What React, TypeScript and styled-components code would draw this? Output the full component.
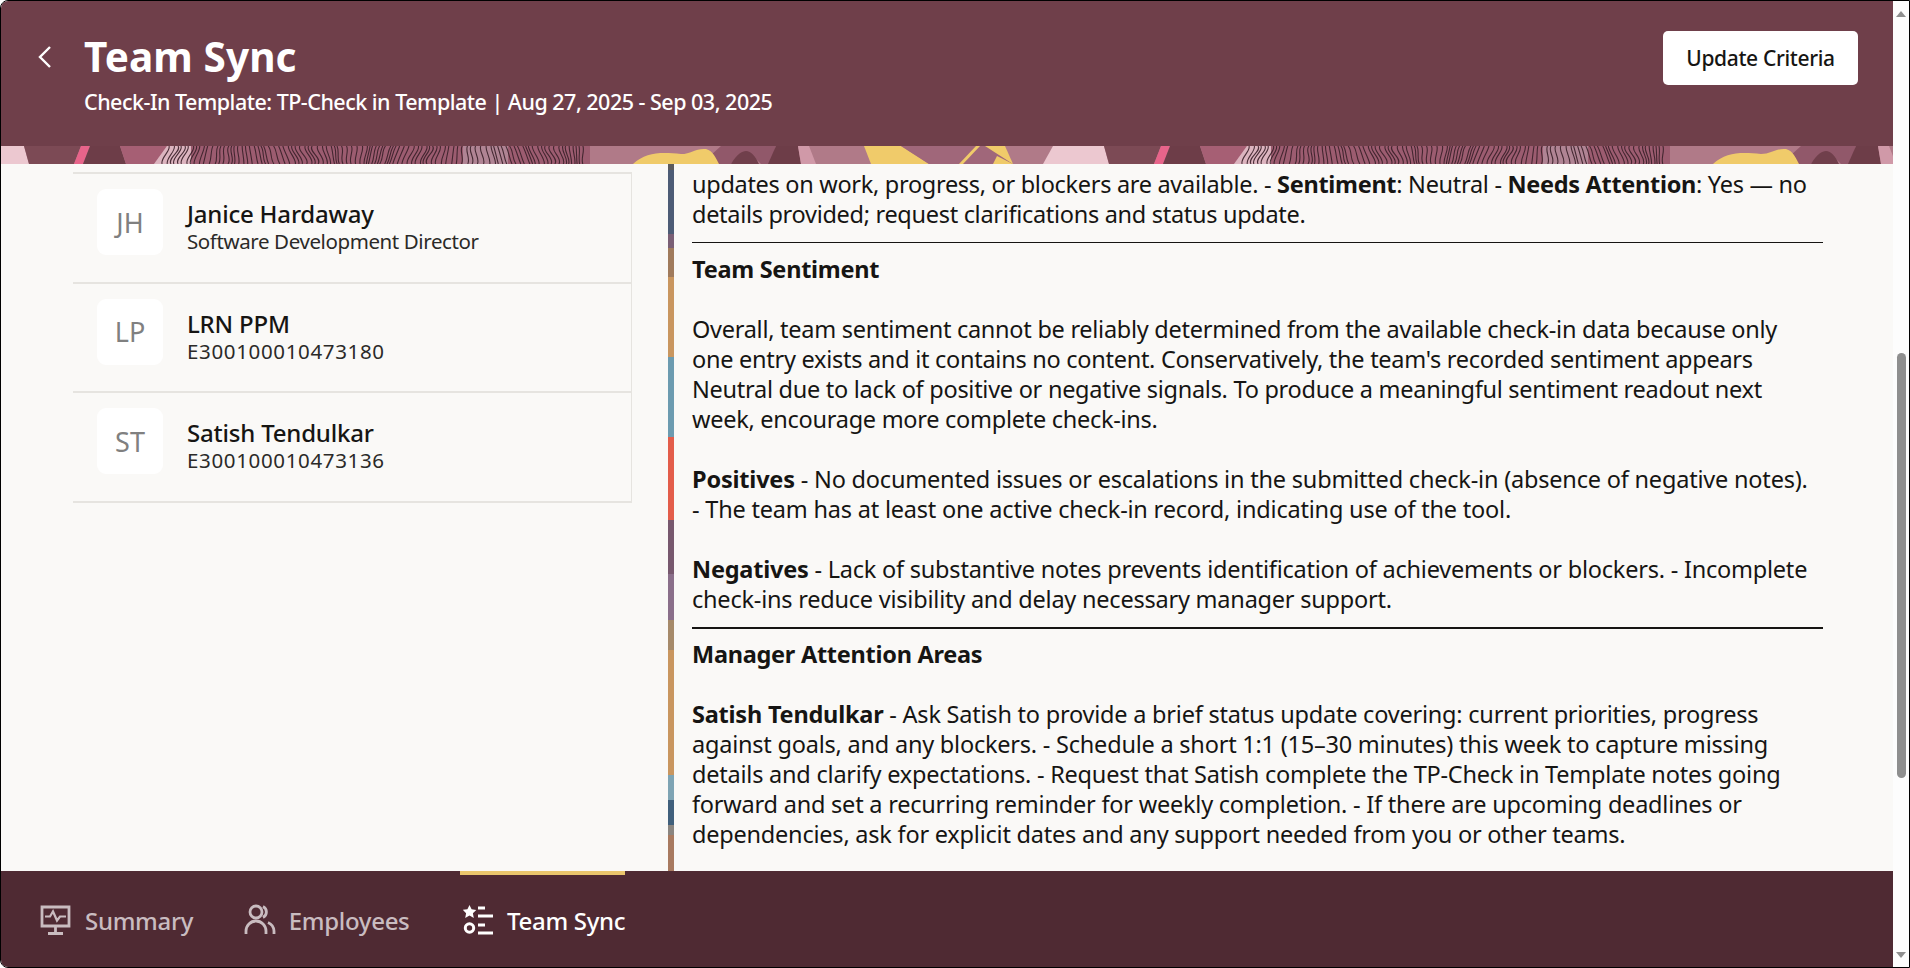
import React from "react";
import styled, { createGlobalStyle } from "styled-components";

const FONT = `"Noto Sans", "Open Sans", sans-serif`;

const Global = createGlobalStyle`
  html, body { margin: 0; padding: 0; background: #fff; }
  * { box-sizing: border-box; }
`;

const Frame = styled.div`
  width: 1910px;
  height: 968px;
  border: 1px solid #000;
  border-radius: 8px 0 0 8px;
  overflow: hidden;
  display: flex;
  font-family: ${FONT};
  color: #161513;
  background: #fff;
`;
const Main = styled.div`
  width: 1892px;
  display: flex;
  flex-direction: column;
`;
const Header = styled.header`
  height: 145px;
  background: #6f3f4a;
  display: flex;
  align-items: flex-start;
  color: #fff;
  padding: 30px 35px 0 36px;
`;
const BackButton = styled.button`
  width: 47px;
  height: 48px;
  margin-top: 2px;
  padding: 0;
  border: 0;
  background: none;
  color: #fff;
  text-align: left;
  display: flex;
  align-items: center;
`;
const HeaderText = styled.div`
  flex: 1;
`;
const Title = styled.h1`
  margin: 0;
  font-size: 40.5px;
  line-height: 52px;
  font-weight: 700;
  letter-spacing: 0.1px;
`;
const Subtitle = styled.div`
  font-size: 21.5px;
  line-height: 28px;
  font-weight: 500;
  margin-top: 5px;
  letter-spacing: -0.51px;
`;
const UpdateButton = styled.button`
  width: 195px;
  height: 54px;
  border: 0;
  border-radius: 5px;
  background: #fff;
  color: #161513;
  font-family: ${FONT};
  font-size: 21px;
  font-weight: 500;
  letter-spacing: -0.35px;
`;
const Band = styled.svg`
  display: block;
  width: 1892px;
  height: 18px;
  flex: none;
`;
const Body = styled.div`
  flex: 1;
  min-height: 0;
  display: flex;
  background: #faf9f7;
`;
const LeftPane = styled.aside`
  width: 667px;
  padding: 8px 36px 0 72px;
  flex: none;
`;
const PeopleList = styled.ul`
  list-style: none;
  margin: 0;
  padding: 0;
  border-top: 2px solid #e6e4e0;
  border-right: 1px solid #e6e4e0;
`;
const Person = styled.li`
  height: 109.6px;
  border-bottom: 2px solid #e6e4e0;
  display: flex;
  padding: 15px 0 0 24px;
`;
const Avatar = styled.div`
  width: 66px;
  height: 66px;
  border-radius: 9px;
  background: #fff;
  color: #808080;
  font-size: 27px;
  display: flex;
  align-items: center;
  justify-content: center;
  flex: none;
`;
const PersonText = styled.div`
  margin-left: 24px;
  padding-top: 10px;
`;
const PersonName = styled.div`
  font-size: 24px;
  line-height: 30px;
  font-weight: 500;
  letter-spacing: -0.2px;
`;
const PersonSub = styled.div<{ $spacing: number }>`
  font-size: 20.5px;
  line-height: 24px;
  color: #2b2a28;
  letter-spacing: ${(p) => p.$spacing}px;
`;
const Strip = styled.div`
  width: 6px;
  flex: none;
  background: linear-gradient(
    180deg,
    #5b5b5d 0 6px,
    #4d5c76 6px 70px,
    #7a5f75 70px 84px,
    #a07b5c 84px 113px,
    #c9965f 113px 193px,
    #6c9bb0 193px 273px,
    #e35d4a 273px 356px,
    #77586e 356px 410px,
    #8a6f8a 410px 456px,
    #a68a6a 456px 486px,
    #c9965f 486px 611px,
    #7ea4b4 611px 636px,
    #40607c 636px 661px,
    #8a8580 661px 671px,
    #a87a60 671px 707px
  );
`;
const Article = styled.article`
  flex: 1;
  padding: 5px 70px 0 18px;
  font-size: 23.5px;
  line-height: 30px;
  letter-spacing: -0.27px;
  overflow: hidden;
  white-space: nowrap;
`;
const Para = styled.p<{ $spacing?: number }>`
  margin: 0 0 30px;
  ${(p) => (p.$spacing !== undefined ? `letter-spacing: ${p.$spacing}px;` : "")}
  &:last-child { margin-bottom: 0; }
`;
const ParaTight = styled(Para)`
  margin-bottom: 0;
`;
const Rule = styled.hr<{ $thick?: boolean }>`
  margin: 13px 0 ${(p) => (p.$thick ? 10 : 11)}px;
  border: 0;
  height: ${(p) => (p.$thick ? 2 : 1)}px;
  background: #161513;
`;
const Heading = styled.h2`
  margin: 0 0 30px;
  font-size: inherit;
  line-height: 30px;
  font-weight: 700;
`;
const Footer = styled.nav`
  height: 96px;
  background: #4f2a33;
  display: flex;
  padding-left: 39px;
  flex: none;
`;
const Tab = styled.a<{ $active?: boolean }>`
  display: flex;
  align-items: center;
  gap: 13px;
  height: 100%;
  padding: 0 0 2px ${(p) => (p.$active ? 3 : 0)}px;
  margin-right: ${(p) => (p.$active ? 0 : 50.5)}px;
  border-top: 4px solid ${(p) => (p.$active ? "#eac66d" : "transparent")};
  color: ${(p) => (p.$active ? "#fff" : "#c9bcc0")};
  font-size: 24px;
  font-weight: 500;
  letter-spacing: -0.3px;
`;
const Scrollbar = styled.div`
  width: 16px;
  flex: none;
  display: flex;
  flex-direction: column;
  align-items: center;
  background: #fdfdfd;
`;
const ArrowUp = styled.div`
  margin-top: 10px;
  width: 0;
  height: 0;
  border-left: 5px solid transparent;
  border-right: 5px solid transparent;
  border-bottom: 6px solid #8f8f8f;
`;
const Thumb = styled.div`
  width: 9px;
  height: 425px;
  margin-top: 336px;
  border-radius: 5px;
  background: #8f8f8f;
`;
const ArrowDown = styled.div`
  margin-top: 174px;
  width: 0;
  height: 0;
  border-left: 5px solid transparent;
  border-right: 5px solid transparent;
  border-top: 6px solid #8f8f8f;
`;

function rng(seed: number) {
  let s = seed;
  return () => {
    s = (s * 9301 + 49297) % 233280;
    return s / 233280;
  };
}

function fingerprintPaths(): string[] {
  const r = rng(17);
  const out: string[] = [];
  let x = 168;
  while (x < 587) {
    const lean = Math.sin(x / 37) * 7;
    const w = Math.sin(x / 13) * 3.5 + (r() - 0.5) * 2;
    out.push(
      `M${x.toFixed(1)} 0 C${(x + w).toFixed(1)} 5 ${(x + lean - w).toFixed(1)} 12 ${(x + lean).toFixed(1)} 18`
    );
    x += 2.4 + r() * 3.2;
  }
  return out;
}

const PRINT = fingerprintPaths();

function BandTile({ offset }: { offset: number }) {
  return (
    <g transform={`translate(${offset} 0)`}>
      <rect x="-38" y="0" width="1080" height="18" fill="#b07a88" />
      <polygon points="-28,0 23,0 28,18 -38,18" fill="#ecc8d0" />
      <polygon points="23,0 80,0 73,18 28,18" fill="#7c4a55" />
      <polygon points="80,0 89,0 82,18 73,18" fill="#e8648a" />
      <polygon points="89,0 119,0 125,18 82,18" fill="#6d3d48" />
      <polygon points="119,0 166,0 153,18 125,18" fill="#a65f74" />
      <polygon points="166,0 200,0 200,18 153,18" fill="#dcb4bf" />
      <rect x="190" y="0" width="399" height="18" fill="#9c5c70" />
      <rect x="462" y="0" width="45" height="18" fill="#b08494" />
      <g fill="none" stroke="#3a2029" strokeWidth="1.100" strokeOpacity="0.9">
        {PRINT.map((d, i) => (
          <path key={i} d={d} />
        ))}
      </g>
      <path d="M720 0H775L770 18H760C752 8 738 8 730 18H700Z" fill="#91586a" />
      <path d="M730 18C736 8 741 5 745 5C750 5 754 10 758 18Z" fill="#703f4b" />
      <path d="M632 18C645 6 660 6 680 8C690 8 695 2 705 3C712 5 715 12 718 18Z" fill="#f0cb6a" />
      <polygon points="775,0 797,0 800,18 767,18" fill="#6d3d48" />
      <polygon points="797,0 808,0 815,18 800,18" fill="#d099a8" />
      <polygon points="863,0 900,0 928,18 870,18" fill="#f0cb6a" />
      <polygon points="900,0 985,0 1012,18 928,18" fill="#a0677a" />
      <polygon points="975,0 979,0 962,18 958,18" fill="#f0cb6a" />
      <polygon points="984,0 1004,0 1012,18" fill="#f0cb6a" />
      <polygon points="992,18 1012,18 996,10" fill="#f0cb6a" />
    </g>
  );
}

const MonitorIcon = () => (
  <svg width="32" height="32" viewBox="0 0 32 32" fill="none" stroke="currentColor" strokeWidth="2.800">
    <path d="M2 3h27v19H2z" />
    <path d="M5 12.500h5l3-5 4 9 3-4h6" strokeWidth="2.200" />
    <path d="M15.500 22v7M8 29.500h15" />
  </svg>
);
const PeopleIcon = () => (
  <svg width="32" height="32" viewBox="0 0 32 32" fill="none" stroke="currentColor" strokeWidth="2.800">
    <circle cx="12" cy="8" r="6" />
    <path d="M19 2.600a6 6 0 0 1 0 10.800" />
    <path d="M2 30v-3a10 10 0 0 1 20 0v3" />
    <path d="M24 18.500a10 10 0 0 1 6 8.500v3" />
  </svg>
);
const SyncIcon = () => (
  <svg width="31" height="32" viewBox="0 0 31 32" fill="none" stroke="currentColor" strokeWidth="3">
    <path
      d="M6.500 1l2.100 4.300 4.700.6-3.400 3.300.9 4.700-4.300-2.300-4.300 2.300.9-4.700L-.2 5.900l4.600-.6z"
      fill="currentColor"
      stroke="none"
    />
    <circle cx="6.500" cy="24" r="4.200" />
    <path d="M15 4h7M15 12h15M15 21h7M15 29h15" />
  </svg>
);
const Chevron = () => (
  <svg width="16" height="24" viewBox="0 0 16 24" fill="none" stroke="currentColor" strokeWidth="2.400">
    <path d="M13 2L3 12l10 10" />
  </svg>
);

const people = [
  { initials: "JH", name: "Janice Hardaway", sub: "Software Development Director", spacing: -0.4 },
  { initials: "LP", name: "LRN PPM", sub: "E300100010473180", spacing: 0.65 },
  { initials: "ST", name: "Satish Tendulkar", sub: "E300100010473136", spacing: 0.65 },
];

export default function App() {
  return (
    <>
      <Global />
      <Frame>
        <Main>
          <Header>
            <BackButton aria-label="Back">
              <Chevron />
            </BackButton>
            <HeaderText>
              <Title>Team Sync</Title>
              <Subtitle>Check-In Template: TP-Check in Template | Aug 27, 2025 - Sep 03, 2025</Subtitle>
            </HeaderText>
            <UpdateButton>Update Criteria</UpdateButton>
          </Header>
          <Band viewBox="0 0 1892 18" preserveAspectRatio="none">
            <BandTile offset={0} />
            <BandTile offset={1080} />
          </Band>
          <Body>
            <LeftPane>
              <PeopleList>
                {people.map((p) => (
                  <Person key={p.initials}>
                    <Avatar>{p.initials}</Avatar>
                    <PersonText>
                      <PersonName>{p.name}</PersonName>
                      <PersonSub $spacing={p.spacing}>{p.sub}</PersonSub>
                    </PersonText>
                  </Person>
                ))}
              </PeopleList>
            </LeftPane>
            <Strip />
            <Article>
              <ParaTight $spacing={-0.3}>
                updates on work, progress, or blockers are available. - <strong>Sentiment</strong>: Neutral -{" "}
                <strong>Needs Attention</strong>: Yes — no
                <br />
                details provided; request clarifications and status update.
              </ParaTight>
              <Rule />
              <Heading>Team Sentiment</Heading>
              <Para>
                Overall, team sentiment cannot be reliably determined from the available check-in data because only
                <br />
                one entry exists and it contains no content. Conservatively, the team's recorded sentiment appears
                <br />
                Neutral due to lack of positive or negative signals. To produce a meaningful sentiment readout next
                <br />
                week, encourage more complete check-ins.
              </Para>
              <Para $spacing={-0.2}>
                <strong>Positives</strong> - No documented issues or escalations in the submitted check-in (absence of
                negative notes).
                <br />- The team has at least one active check-in record, indicating use of the tool.
              </Para>
              <ParaTight $spacing={-0.22}>
                <strong>Negatives</strong> - Lack of substantive notes prevents identification of achievements or
                blockers. - Incomplete
                <br />
                check-ins reduce visibility and delay necessary manager support.
              </ParaTight>
              <Rule $thick />
              <Heading>Manager Attention Areas</Heading>
              <Para $spacing={-0.22}>
                <strong>Satish Tendulkar</strong> - Ask Satish to provide a brief status update covering: current
                priorities, progress
                <br />
                against goals, and any blockers. - Schedule a short 1:1 (15–30 minutes) this week to capture missing
                <br />
                details and clarify expectations. - Request that Satish complete the TP-Check in Template notes going
                <br />
                forward and set a recurring reminder for weekly completion. - If there are upcoming deadlines or
                <br />
                dependencies, ask for explicit dates and any support needed from you or other teams.
              </Para>
            </Article>
          </Body>
          <Footer>
            <Tab>
              <MonitorIcon />
              Summary
            </Tab>
            <Tab>
              <PeopleIcon />
              Employees
            </Tab>
            <Tab $active>
              <SyncIcon />
              Team Sync
            </Tab>
          </Footer>
        </Main>
        <Scrollbar>
          <ArrowUp />
          <Thumb />
          <ArrowDown />
        </Scrollbar>
      </Frame>
    </>
  );
}
